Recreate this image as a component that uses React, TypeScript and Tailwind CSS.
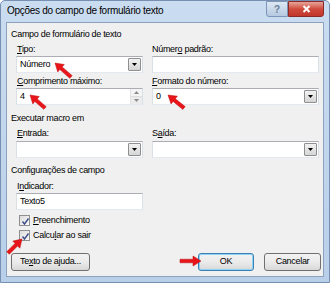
import React from "react";

const font = "font-[family-name:Liberation_Sans,Arial,sans-serif]";
const txt = "text-[9px] tracking-[-0.3px]";

// access-key underline helper
const Key = ({ children }: { children: React.ReactNode }) => (
  <span className="underline underline-offset-[1px]">{children}</span>
);

const Field = ({
  value,
  width,
  kind,
}: {
  value?: string;
  width: string;
  kind: "text" | "combo" | "spin";
}) => (
  <div
    className={`${width} h-[17px] flex items-stretch bg-white border border-t-[#abadb3] border-x-[#dbdfe6] border-b-[#e3e9ef]`}
  >
    <div className={`flex-1 flex items-center pl-[3px] ${txt} text-black`}>{value}</div>
    {kind === "combo" && (
      <div className="w-[13px] my-[1px] mr-[1px] flex items-center justify-center border border-[#8e8f8f] rounded-[1px] bg-gradient-to-b from-[#f2f2f2] to-[#d5d5d5]">
        <svg width="5" height="3" viewBox="0 0 5 3">
          <polygon points="0,0 5,0 2.5,3" fill="#000" />
        </svg>
      </div>
    )}
    {kind === "spin" && (
      <div className="w-[12px] flex flex-col border-l border-[#e3e3e3]">
        <div className="flex-1 flex items-center justify-center bg-[#f4f4f4] border-b border-[#dedede]">
          <svg width="5" height="3" viewBox="0 0 5 3">
            <polygon points="0,3 5,3 2.5,0" fill="#8a8a8a" />
          </svg>
        </div>
        <div className="flex-1 flex items-center justify-center bg-[#ececec]">
          <svg width="5" height="3" viewBox="0 0 5 3">
            <polygon points="0,0 5,0 2.5,3" fill="#8a8a8a" />
          </svg>
        </div>
      </div>
    )}
  </div>
);

const Check = ({ children }: { children: React.ReactNode }) => (
  <div className="flex items-center h-[15px] pl-[12px] gap-[3px]">
    <div className="w-[11px] h-[11px] border border-[#8e8f8f] bg-gradient-to-br from-[#dcdcdc] to-[#fbfbfb] p-[1px]">
      <svg width="9" height="9" viewBox="0 0 9 9">
        <path d="M1.5 4.5 L3.5 7 L7.5 1.5" stroke="#3c4f86" strokeWidth="1.4" fill="none" />
      </svg>
    </div>
    <span className={`${txt} text-black`}>{children}</span>
  </div>
);

const Arrow = ({ x1, y1, x2, y2 }: { x1: number; y1: number; x2: number; y2: number }) => {
  const dx = x2 - x1;
  const dy = y2 - y1;
  const len = Math.hypot(dx, dy);
  const ux = dx / len;
  const uy = dy / len;
  const nx = -uy;
  const ny = ux;
  const w = 1.8;
  const hw = 5;
  const hl = 8;
  const bx = x2 - ux * hl;
  const by = y2 - uy * hl;
  const pts = [
    [x1 + nx * w, y1 + ny * w],
    [bx + nx * w, by + ny * w],
    [bx + nx * hw, by + ny * hw],
    [x2, y2],
    [bx - nx * hw, by - ny * hw],
    [bx - nx * w, by - ny * w],
    [x1 - nx * w, y1 - ny * w],
  ]
    .map((p) => p.join(","))
    .join(" ");
  return <polygon points={pts} fill="#e8161a" stroke="#b80e10" strokeWidth="0.5" />;
};

const Btn = ({
  children,
  width,
  focus,
}: {
  children: React.ReactNode;
  width: string;
  focus?: boolean;
}) => (
  <div
    className={`${width} h-[18px] rounded-[3px] border ${
      focus ? "border-[#3c7fb1] shadow-[inset_0_0_0_1px_#8fd3f5]" : "border-[#707070]"
    } bg-gradient-to-b from-[#f2f2f2] via-[#ebebeb] to-[#d8d8d8] flex items-center justify-center ${txt} text-black`}
  >
    {children}
  </div>
);

export default function App() {
  return (
    <div className={`relative w-[330px] h-[283px] overflow-hidden ${font}`}>
      <div className="w-full h-full flex flex-col bg-gradient-to-b from-[#cadcf0] to-[#b9cfe9] border border-[#7790b2] rounded-t-[5px]">
        {/* title bar */}
        <div className="h-[21px] flex items-start justify-between">
          <div className="pl-[6px] pt-[3px] text-[10px] tracking-[-0.3px] text-black leading-[14px]">
            Opções do campo de formulário texto
          </div>
          <div className="flex mr-[5px]">
            <div className="w-[22px] h-[16px] flex items-center justify-center border border-[#7d95b6] rounded-bl-[3px] bg-gradient-to-b from-[#dde8f4] to-[#b6c9e2] text-[10px] font-bold text-[#6b7d95]">
              ?
            </div>
            <div className="w-[36px] h-[16px] flex items-center justify-center border border-[#8c2a2a] rounded-br-[3px] bg-gradient-to-b from-[#e5a49a] via-[#cf4a3d] to-[#c2352b]">
              <svg width="9" height="8" viewBox="0 0 9 8">
                <path d="M1.5 1 L7.5 7 M7.5 1 L1.5 7" stroke="#fff" strokeWidth="2" />
              </svg>
            </div>
          </div>
        </div>

        {/* client area */}
        <div className="mx-[5px] flex-1 mb-[5px] bg-[#f0f0f0] border border-[#8da2bf] text-black">
          <div className={`pl-[4px] pt-[4px] ${txt} leading-[14px]`}>Campo de formulário de texto</div>

          <div className="flex gap-[9px] pl-[9px] mt-[1px]">
            <div className="flex flex-col">
              <div className={`pl-[1px] h-[14px] leading-[14px] ${txt}`}>
                <Key>T</Key>ipo:
              </div>
              <Field value="Número" width="w-[127px]" kind="combo" />
              <div className={`pl-[1px] h-[14px] leading-[14px] ${txt} mt-[1px]`}>
                <Key>C</Key>omprimento máximo:
              </div>
              <Field value="4" width="w-[127px]" kind="spin" />
            </div>
            <div className="flex flex-col">
              <div className={`h-[14px] leading-[14px] ${txt}`}>
                Númer<Key>o</Key> padrão:
              </div>
              <Field width="w-[167px]" kind="text" />
              <div className={`h-[14px] leading-[14px] ${txt} mt-[1px]`}>
                <Key>F</Key>ormato do número:
              </div>
              <Field value="0" width="w-[167px]" kind="combo" />
            </div>
          </div>

          <div className={`pl-[4px] mt-[6px] ${txt} leading-[14px]`}>Executar macro em</div>
          <div className="flex gap-[9px] pl-[9px] mt-[1px]">
            <div className="flex flex-col">
              <div className={`pl-[1px] h-[15px] leading-[14px] ${txt}`}>
                <Key>E</Key>ntrada:
              </div>
              <Field width="w-[127px]" kind="combo" />
            </div>
            <div className="flex flex-col">
              <div className={`h-[15px] leading-[14px] ${txt}`}>
                S<Key>a</Key>ída:
              </div>
              <Field width="w-[167px]" kind="combo" />
            </div>
          </div>

          <div className={`pl-[4px] mt-[5px] ${txt} leading-[14px]`}>Configurações de campo</div>
          <div className="pl-[9px] mt-[2px] flex flex-col">
            <div className={`pl-[1px] h-[14px] leading-[14px] ${txt}`}>
              I<Key>n</Key>dicador:
            </div>
            <Field value="Texto5" width="w-[127px]" kind="text" />
          </div>

          <div className="mt-[3px] flex flex-col">
            <Check>
              <Key>P</Key>reenchimento
            </Check>
            <Check>
              Calcu<Key>l</Key>ar ao sair
            </Check>
          </div>

          <div className="mt-[10px] pl-[4px] pr-[2px] flex items-center">
            <Btn width="w-[79px]">
              Te<Key>x</Key>to de ajuda...
            </Btn>
            <div className="flex-1" />
            <Btn width="w-[56px]" focus>
              OK
            </Btn>
            <div className="w-[10px]" />
            <Btn width="w-[57px]">Cancelar</Btn>
          </div>
        </div>
      </div>

      {/* red annotation arrows */}
      <svg className="absolute inset-0 pointer-events-none" width="330" height="283" viewBox="0 0 330 283">
        <Arrow x1={71} y1={77} x2={55} y2={63} />
        <Arrow x1={45} y1={108} x2={30} y2={95} />
        <Arrow x1={184} y1={108} x2={168} y2={95} />
        <Arrow x1={8} y1={253} x2={22} y2={239} />
        <Arrow x1={180} y1={261} x2={201} y2={261} />
      </svg>
    </div>
  );
}
